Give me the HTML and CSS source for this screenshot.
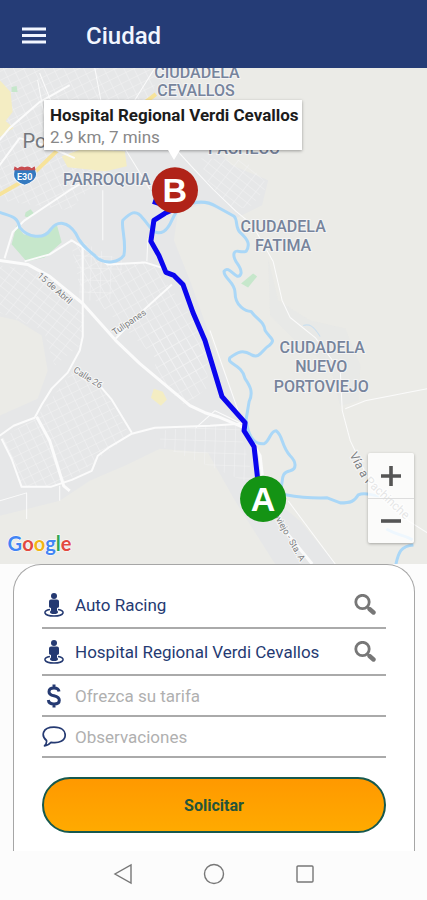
FILE: index.html
```html
<!DOCTYPE html>
<html lang="es">
<head>
<meta charset="utf-8">
<meta name="viewport" content="width=device-width, initial-scale=1">
<title>Ciudad</title>
<link rel="stylesheet" href="styles.css">
</head>
<body>
<header class="app-bar">
  <button class="icon-button menu-button" type="button" aria-label="Menú">
    <svg width="24" height="18" viewBox="0 0 24 18"><path d="M0 2h24M0 8.500h24M0 15h24" stroke="currentColor" stroke-width="2.800"/></svg>
  </button>
  <h1 class="app-title">Ciudad</h1>
</header>

<main class="screen">
  <section class="map" aria-label="Mapa">
    <svg class="map-canvas" viewBox="0 68 427 495" preserveAspectRatio="xMidYMid slice">
      <defs>
        <pattern id="blocks-a" width="9" height="8" patternUnits="userSpaceOnUse" patternTransform="rotate(-26)"><path d="M0 0H9M0 0V8" class="block-line"/></pattern>
        <pattern id="blocks-b" width="8" height="11" patternUnits="userSpaceOnUse" patternTransform="rotate(-30)"><path d="M0 0H8M0 0V11" class="block-line"/></pattern>
        <pattern id="blocks-c" width="11" height="7" patternUnits="userSpaceOnUse" patternTransform="rotate(38)"><path d="M0 0H11M0 0V7" class="block-line"/></pattern>
        <pattern id="blocks-d" width="10" height="12" patternUnits="userSpaceOnUse" patternTransform="rotate(2)"><path d="M0 0H10M0 0V12" class="block-line"/></pattern>
      </defs>
      <rect x="-400" y="-300" width="1300" height="1300" fill="#ebebe7"/>
      <path class="urban" d="M0 68H175L205 140L232 165L268 180L262 205L236 218L205 203L178 212L174 240L190 280L215 350L240 412L253 450L262 490L300 520L335 563H275L235 500L208 452L160 448L125 465L90 480L60 500L0 515V415L38 398L48 370L42 335L18 320L0 316Z"/>
      <path class="urban" d="M268 258L278 300L310 320L345 328L360 365L358 400L340 405L330 365L300 345L270 315Z" opacity=".5"/>
      <path d="M0 68H160L140 135L70 210L0 200Z" fill="url(#blocks-a)"/>
      <path d="M70 238L110 265L150 260L195 320L212 360L185 385L80 285Z" fill="url(#blocks-b)"/>
      <path d="M0 265L35 270L85 315L80 345L55 365L44 330L0 312Z" fill="url(#blocks-c)"/>
      <path d="M38 415L75 368L105 390L130 434L90 465L60 485L22 487L2 438Z" fill="url(#blocks-a)"/>
      <path d="M75 238L125 262L110 300L80 300Z" fill="url(#blocks-d)"/>
      <path d="M200 158L245 160L268 185L252 205L235 210L208 182Z" fill="url(#blocks-c)"/>
      <path d="M160 430L238 422L255 485L220 470L160 445Z" fill="url(#blocks-d)"/>
      <path d="M150 320L200 345L210 385L185 405L157 378Z" fill="url(#blocks-b)"/>

      <g fill="#f4edc3">
        <path d="M0 80L11 92L13 112L6 121L14 128L0 137Z"/>
        <path d="M62 156L82 149L125 151L127 166L106 171L68 167Z"/>
        <path d="M154 388L163 391L167 399L161 405L151 397Z"/>
      </g>
      <path class="park" d="M17 225L24 234L37 237L49 231L57 224L62 242L45 257L27 261L12 244Z"/>
      <path class="park" d="M26 212L31 209L35 214L30 218L25 216Z"/>
      <path class="park" d="M12 87L17 86L18 92L12 92Z"/>
      <path class="park" d="M241 283L253 273L257 276L248 287Z"/>

      <g class="major">
        <path d="M-10 200L30 177L59 149" /><path d="M143 104L156 94"/>
      </g>
      <path class="road wide" d="M0 260L28 264L50 276L83 303L116 340L140 363L190 405L205 412L218 416L244 427L260 455L264 490L285 530L312 563"/>
      <path class="road" d="M0 435L14 425L35 417L42 404L52 388L68 372L80 350L83 336V247"/>
      <path class="road wide" d="M37 416L50 440L64 485L70 490"/>
      <path class="road" d="M2 438L12 458L22 486H51L72 479L92 470L98 455L110 446L132 433L155 427L210 425L240 423"/>
      <path class="road" d="M100 385L112 399L132 432"/>
      <path class="road" d="M5 258L13 232L25 220L70 190L90 178"/>
      <path class="road" d="M25 261L50 254L72 240L83 247L108 264L145 262L164 268"/>
      <path class="road" d="M116 338L140 313L172 284"/>
      <path class="road" d="M0 140L10 128L40 102L70 85M0 165L20 138L45 145L75 158"/>
      <path class="road thin" d="M174 147L195 170L213 189L236 211L252 224L273 261L282 300L290 317L315 337L340 370L342 410L350 440L370 482L408 520L440 540"/>
      <path class="road thin" d="M125 148L150 189M40 73L58 118L70 125M95 68L102 105M103 190V240M148 238L147 261M38 80L50 145M155 68L135 100M345 408L365 400L427 388M244 424L215 410L196 427M210 330L244 427M288 500L335 563M0 500L27 492V518M60 485V500"/>

      <g class="river">
        <path d="M0 212C11 216 18 216 20 227C28 237 44 240 51 229C58 220 68 221 76 233C82 247 92 252 98 258C107 264 119 262 124 255C127 242 121 226 123 220C130 213 136 208 143 218C151 227 154 236 164 231C173 225 171 214 182 206C197 200 208 201 216 206L234 216C238 220 235 227 240 232C249 240 250 245 246 251C240 253 236 248 234 253C232 261 242 265 241 273C237 283 229 263 224 271C224 278 235 282 235 292C235 306 246 311 251 311C258 320 264 321 265 330C271 339 276 339 269 345C262 349 260 359 251 354C243 349 238 351 230 357C226 364 242 363 245 378C249 384 254 391 249 401L246 419C248 433 252 444 264 443C270 440 270 430 276 430C283 435 281 445 290 455C296 461 297 468 290 470C279 472 284 481 280 490"/>
        <path d="M280 493C292 495 304 498 327 497L340 502C350 502 354 501 358 494C366 490 372 496 382 495"/>
        <path d="M386 528C398 535 405 534 412 539M413 544C401 545 398 550 395 566"/>
        <path class="stream" d="M303 325C309 323 313 325 320 336"/>
      </g>

      <g class="street-name">
        <text transform="translate(37 276) rotate(41)">15 de Abril</text>
        <text transform="translate(115 335) rotate(-34)">Tulipanes</text>
        <text transform="translate(73 371) rotate(32)">Calle 26</text>
        <text class="street-large" transform="translate(349 454) rotate(62)">Vía a</text>
        <text class="street-large" transform="translate(364 481) rotate(43)">Pachinche</text>
        <text transform="translate(273 514) rotate(60)">oviejo - Sta. A</text>
      </g>
      <g class="district">
        <text x="197" y="78">CIUDADELA</text><text x="196" y="96">CEVALLOS</text>
        <text x="244" y="154">PACHECO</text>
        <text x="107" y="185">PARROQUIA</text>
        <text x="283" y="232">CIUDADELA</text><text x="283" y="251">FATIMA</text>
        <text x="322" y="352">CIUDADELA</text><text x="321" y="371">NUEVO</text><text x="321" y="391">PORTOVIEJO</text>
      </g>
      <text class="city" x="23" y="148">Po</text>

      <path d="M15 166L18 168Q21 165 25 167Q29 165 32 168L35 166L37 174Q37 181 25 185Q13 181 14 174Z" fill="#347ac0" stroke="#f5f6fa"/>
      <path d="M15 166L18 168Q21 165 25 167Q29 165 32 168L35 166L36 170H14Z" fill="#c84d50"/>
      <text class="shield" x="25" y="180">E30</text>

      <path class="route" d="M176 208L165 213L154 220L151 241L159 255L166 272L174 275L183 284L193 312L205 340L222 396L245 422L244 430L254 446L258 482M153 201L162 204"/>
      <circle cx="175" cy="190" r="23" fill="#b02318"/><text class="pin" x="175" y="202">B</text>
      <circle cx="263" cy="498" r="23" fill="#149314"/><text class="pin" x="263" y="510">A</text>
      <text class="google" x="8" y="550"><tspan fill="#4285f4">G</tspan><tspan fill="#e24a3f">o</tspan><tspan fill="#f2b515">o</tspan><tspan fill="#4285f4">g</tspan><tspan fill="#34a853">l</tspan><tspan fill="#e24a3f">e</tspan></text>
    </svg>
    <div class="callout">
      <strong>Hospital Regional Verdi Cevallos</strong>
      <span>2.9 km, 7 mins</span>
    </div>
    <div class="zoom-controls">
      <button type="button" aria-label="Acercar"><svg width="20" height="20" viewBox="0 0 20 20"><path d="M0 10h20M10 0v20" stroke="currentColor" stroke-width="3.600"/></svg></button>
      <button type="button" aria-label="Alejar"><svg width="20" height="20" viewBox="0 0 20 20"><path d="M0 10h20" stroke="currentColor" stroke-width="3.600"/></svg></button>
    </div>
  </section>

  <form class="trip">
    <div class="field">
      <label for="origin" aria-label="Origen"><svg width="20" height="26" viewBox="0 0 20 26"><path d="M6 17.500C-1.500 18.500-1 24 10 24s11.500-5.500 4-6.500" fill="none" stroke="currentColor" stroke-width="1.500"/><ellipse cx="10" cy="20" rx="4" ry="2"/><circle cx="10" cy="4" r="3"/><path d="M7 7.500h6q2 0 2 2v5q0 1-2 1.500v5H7v-5q-2-.500-2-1.500v-5q0-2 2-2z"/></svg></label>
      <input id="origin" type="text" value="Auto Racing">
      <button class="icon-button search" type="button" aria-label="Buscar origen"><svg width="22" height="22" viewBox="0 0 22 22"><circle cx="8.500" cy="8" r="6.700" fill="none" stroke="currentColor" stroke-width="2.800"/><path d="M13 12.500l2 2" stroke="currentColor" stroke-width="2"/><path d="M15.500 15l4 3.500" stroke="currentColor" stroke-width="4.400" stroke-linecap="round"/></svg></button>
    </div>
    <div class="field">
      <label for="destination" aria-label="Destino"><svg width="20" height="26" viewBox="0 0 20 26"><path d="M6 17.500C-1.500 18.500-1 24 10 24s11.500-5.500 4-6.500" fill="none" stroke="currentColor" stroke-width="1.500"/><ellipse cx="10" cy="20" rx="4" ry="2"/><circle cx="10" cy="4" r="3"/><path d="M7 7.500h6q2 0 2 2v5q0 1-2 1.500v5H7v-5q-2-.500-2-1.500v-5q0-2 2-2z"/></svg></label>
      <input id="destination" type="text" value="Hospital Regional Verdi Cevallos">
      <button class="icon-button search" type="button" aria-label="Buscar destino"><svg width="22" height="22" viewBox="0 0 22 22"><circle cx="8.500" cy="8" r="6.700" fill="none" stroke="currentColor" stroke-width="2.800"/><path d="M13 12.500l2 2" stroke="currentColor" stroke-width="2"/><path d="M15.500 15l4 3.500" stroke="currentColor" stroke-width="4.400" stroke-linecap="round"/></svg></button>
    </div>
    <div class="field compact">
      <label for="fare" aria-label="Tarifa"><svg width="16" height="26" viewBox="0 0 16 26"><path d="M13 8.500Q12.500 5 8 5Q3 5 3 8.700Q3 11.700 8 12.800Q13.300 14 13.300 17.300Q13.300 21 8 21Q2.800 21 2.300 17M8 1.500v4M8 20.500v4" fill="none" stroke="currentColor" stroke-width="3"/></svg></label>
      <input id="fare" type="text" placeholder="Ofrezca su tarifa">
    </div>
    <div class="field">
      <label for="notes" aria-label="Observaciones"><svg width="24" height="22" viewBox="0 0 24 22"><path d="M4.500 14.500C-1 10 0 1.200 12 1.200C20 1.200 23.200 5 23.200 9C23.200 15 17 17.500 9 16.300Q6 19.800 2.500 19.800Q5 17.500 4.500 14.500Z" fill="none" stroke="currentColor" stroke-width="1.700" stroke-linejoin="round"/></svg></label>
      <input id="notes" type="text" placeholder="Observaciones">
    </div>
    <button class="submit" type="submit">Solicitar</button>
  </form>
</main>

<nav class="system-nav" aria-label="Sistema">
  <button class="icon-button" type="button" aria-label="Atrás"><svg width="20" height="22" viewBox="0 0 20 22"><path d="M18 2v18L2 11z"/></svg></button>
  <button class="icon-button" type="button" aria-label="Inicio"><svg width="22" height="22" viewBox="0 0 22 22"><circle cx="11" cy="11" r="9.500"/></svg></button>
  <button class="icon-button" type="button" aria-label="Recientes"><svg width="20" height="20" viewBox="0 0 20 20"><rect x="2" y="2" width="16" height="16" rx="1"/></svg></button>
</nav>
</body>
</html>
```
FILE: styles.css
```css
* {
  box-sizing: border-box;
}

body {
  margin: 0;
  min-height: 100vh;
  display: flex;
  flex-direction: column;
  background: #fcfcfc;
  color: #253a72;
  font-family: Roboto, "Liberation Sans", sans-serif;
}

button,
input {
  font: inherit;
  color: inherit;
}

svg {
  display: block;
}

.icon-button {
  display: grid;
  place-items: center;
  padding: 0;
  border: 0;
  background: none;
}

.app-bar {
  display: flex;
  align-items: center;
  gap: 40px;
  height: 68px;
  padding: 4px 22px 0;
  background: #253c76;
  color: #f2f6ff;
}

.app-title {
  margin: 0;
  font-size: 24px;
  font-weight: 500;
  line-height: 28px;
}

.screen {
  flex: 1;
  display: flex;
  flex-direction: column;
}

.map {
  position: relative;
  flex: 1;
  min-height: 320px;
  overflow: hidden;
}

.map-canvas {
  position: absolute;
  inset: 0;
  width: 100%;
  height: 100%;
}

.urban {
  fill: #e6e7e8;
}

.block-line {
  fill: none;
  stroke: #f3f3f4;
  stroke-width: 1;
}

.park {
  fill: #c6e7cb;
}

.major path {
  fill: none;
  stroke: #f7e39a;
  stroke-width: 4;
}

.road {
  fill: none;
  stroke: #fbfbfb;
  stroke-width: 2;
  stroke-linejoin: round;
}

.road.wide {
  stroke-width: 3;
}

.road.thin {
  stroke-width: 1;
}

.river {
  fill: none;
  stroke: #aad7f7;
  stroke-width: 3;
  stroke-linejoin: round;
}

.stream {
  stroke: #c9dff0;
  stroke-width: 1;
}

.route {
  fill: none;
  stroke: #0b06ee;
  stroke-width: 5;
  stroke-linejoin: round;
}

.district {
  fill: #77849c;
  stroke: #f4f4f4;
  stroke-width: 2;
  paint-order: stroke;
  font-size: 16px;
  font-weight: 500;
  text-anchor: middle;
}

.city {
  fill: #73777c;
  font-size: 20px;
}

.street-name {
  fill: #7d7f82;
  stroke: #f7f7f7;
  stroke-width: 2;
  paint-order: stroke;
  font-size: 9px;
}

.street-large {
  font-size: 12px;
}

.shield {
  fill: #ffffff;
  font-size: 9px;
  font-weight: 700;
  text-anchor: middle;
}

.pin {
  fill: #ffffff;
  font-family: "Liberation Sans", sans-serif;
  font-size: 34px;
  font-weight: 700;
  text-anchor: middle;
}

.google {
  stroke: #ffffff;
  stroke-width: 1;
  paint-order: stroke;
  font-family: Lato, sans-serif;
  font-size: 20px;
  font-weight: 700;
}

.callout {
  position: absolute;
  top: 32px;
  left: 44px;
  display: grid;
  padding: 4px 3px 2px 6px;
  background: #ffffff;
  box-shadow: 0 1px 3px rgba(0, 0, 0, 0.35);
  color: #888888;
  font-size: 17px;
  line-height: 22px;
  white-space: nowrap;
}

.callout strong {
  color: #1c1c1c;
}

.callout::after {
  content: "";
  position: absolute;
  top: 100%;
  left: 124px;
  border: solid transparent;
  border-width: 10px 6px 0;
  border-top-color: #ffffff;
}

.zoom-controls {
  position: absolute;
  right: 13px;
  bottom: 21px;
  width: 46px;
  border-radius: 2px;
  background: rgba(255, 255, 255, 0.8);
  box-shadow: 0 1px 3px rgba(0, 0, 0, 0.3);
}

.zoom-controls button {
  display: grid;
  place-items: center;
  width: 100%;
  height: 45px;
  padding: 0;
  border: 0;
  background: none;
  color: #555555;
}

.zoom-controls button + button {
  border-top: 1px solid #dddddd;
}

.trip {
  margin: 0 12px 0 13px;
  padding: 17px 28px 18px;
  border: 1px solid #a6a6a6;
  border-bottom: 0;
  border-radius: 28px 28px 0 0;
  background: #ffffff;
}

.field {
  display: flex;
  align-items: center;
  height: 47px;
  border-bottom: 2px solid #aaaaaa;
}

.field.compact,
.field.compact + .field {
  height: 41px;
}

.field label {
  display: grid;
  place-items: center;
  width: 24px;
  margin-right: 9px;
  fill: currentColor;
}

.field input {
  flex: 1;
  min-width: 0;
  padding: 0;
  border: 0;
  outline: 0;
  background: none;
  font-size: 17px;
  line-height: 24px;
}

.field input::placeholder {
  color: #b0b0b0;
  opacity: 1;
}

.search {
  width: 24px;
  height: 32px;
  margin-right: 9px;
  color: #777777;
}

.submit {
  display: block;
  width: 100%;
  height: 56px;
  margin-top: 19px;
  border: 2px solid #17594e;
  border-radius: 28px;
  background: linear-gradient(#ff9900, #ffaa00);
  color: #24543a;
  font-size: 16px;
  font-weight: 700;
}

.system-nav {
  display: flex;
  justify-content: center;
  gap: 68px;
  height: 49px;
  padding-bottom: 3px;
}

.system-nav button {
  width: 23px;
}

.system-nav svg {
  fill: none;
  stroke: #777777;
  stroke-width: 1.4;
}
```
